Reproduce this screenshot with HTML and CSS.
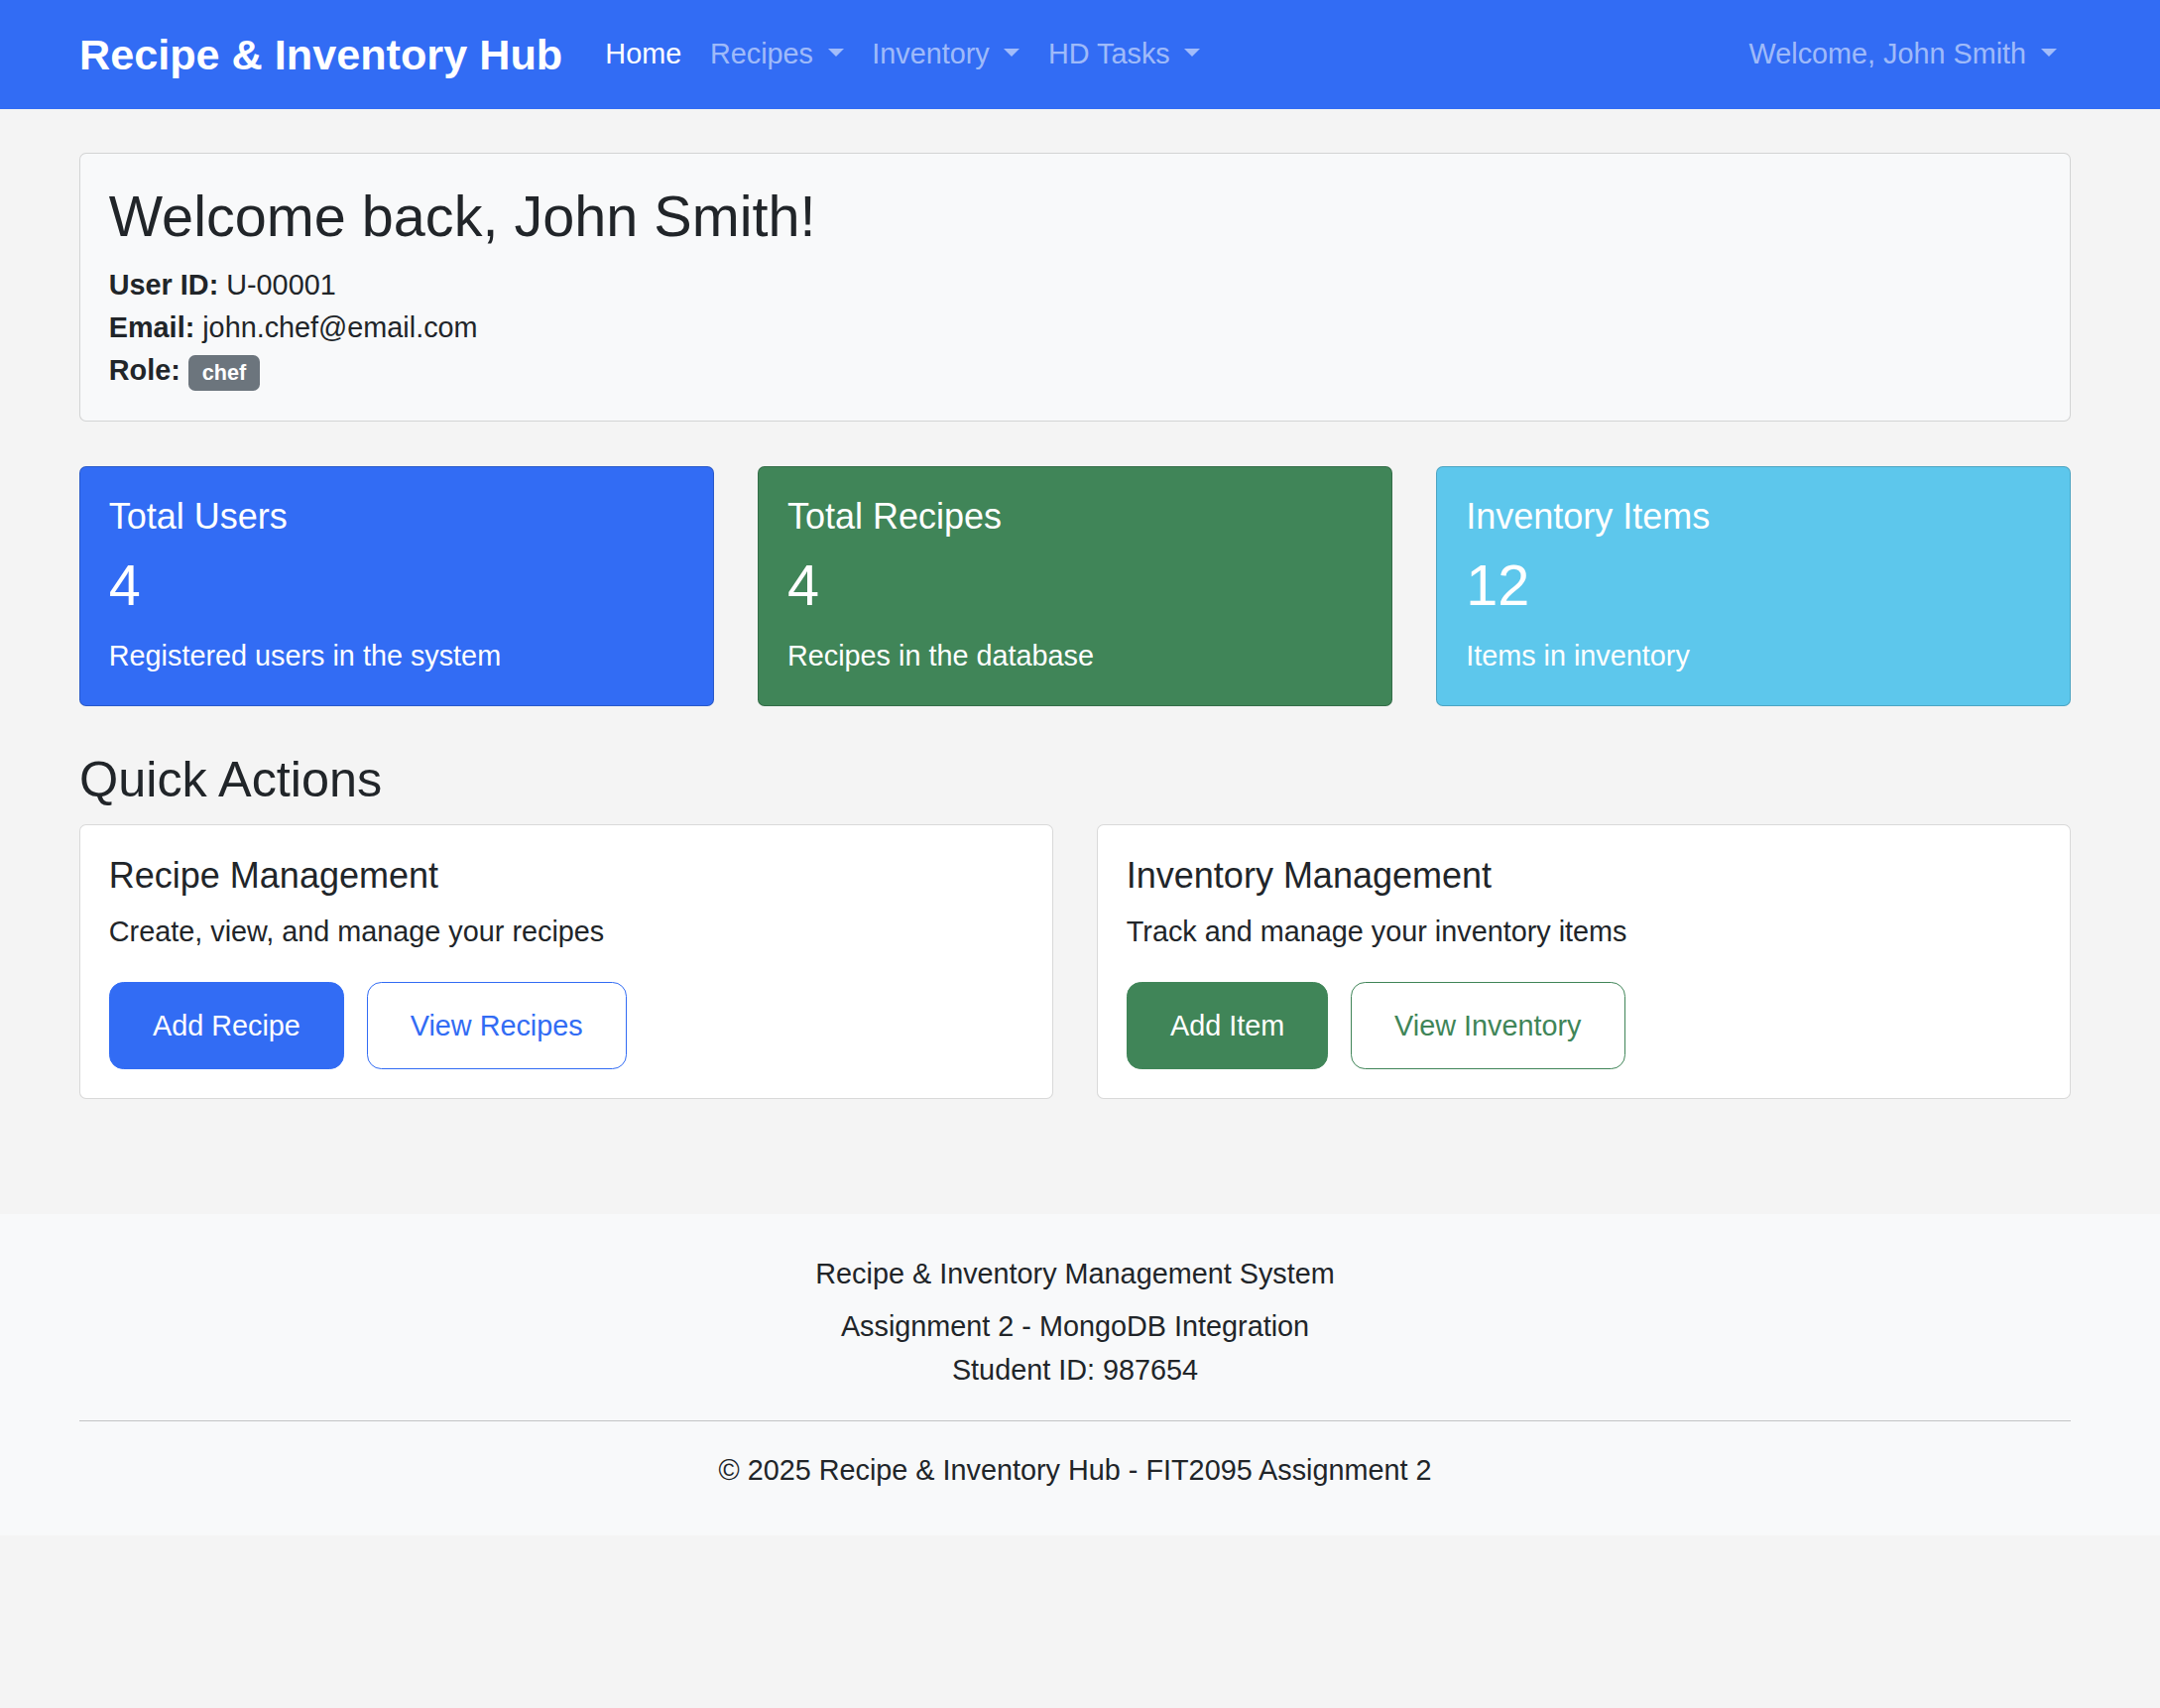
FILE: index.html
```html
<!DOCTYPE html>
<html lang="en">
<head>
<meta charset="utf-8">
<title>Recipe &amp; Inventory Hub</title>
<link rel="stylesheet" href="styles.css">
</head>
<body>
<nav class="navbar">
  <div class="container nav-inner">
    <a class="brand" href="#">Recipe &amp; Inventory Hub</a>
    <ul class="nav-links">
      <li><a class="nav-link active" href="#">Home</a></li>
      <li><a class="nav-link dropdown" href="#">Recipes</a></li>
      <li><a class="nav-link dropdown" href="#">Inventory</a></li>
      <li><a class="nav-link dropdown" href="#">HD Tasks</a></li>
    </ul>
    <ul class="nav-links nav-right">
      <li><a class="nav-link dropdown" href="#">Welcome, John Smith</a></li>
    </ul>
  </div>
</nav>

<main class="container main">
  <section class="card welcome">
    <h2 class="welcome-title">Welcome back, John Smith!</h2>
    <p class="info"><strong>User ID:</strong> U-00001<br><strong>Email:</strong> john.chef@email.com<br><strong>Role:</strong> <span class="badge">chef</span></p>
  </section>

  <div class="stats">
    <div class="stat stat-primary">
      <h5 class="stat-title">Total Users</h5>
      <h2 class="stat-value">4</h2>
      <p class="stat-text">Registered users in the system</p>
    </div>
    <div class="stat stat-success">
      <h5 class="stat-title">Total Recipes</h5>
      <h2 class="stat-value">4</h2>
      <p class="stat-text">Recipes in the database</p>
    </div>
    <div class="stat stat-info">
      <h5 class="stat-title">Inventory Items</h5>
      <h2 class="stat-value">12</h2>
      <p class="stat-text">Items in inventory</p>
    </div>
  </div>

  <h3 class="section-title">Quick Actions</h3>
  <div class="actions">
    <div class="card action">
      <h5 class="action-title">Recipe Management</h5>
      <p class="action-text">Create, view, and manage your recipes</p>
      <div class="btns">
        <a class="btn btn-primary" href="#">Add Recipe</a>
        <a class="btn btn-outline-primary" href="#">View Recipes</a>
      </div>
    </div>
    <div class="card action">
      <h5 class="action-title">Inventory Management</h5>
      <p class="action-text">Track and manage your inventory items</p>
      <div class="btns">
        <a class="btn btn-success" href="#">Add Item</a>
        <a class="btn btn-outline-success" href="#">View Inventory</a>
      </div>
    </div>
  </div>
</main>

<footer class="footer">
  <div class="container footer-inner">
    <h6 class="footer-title">Recipe &amp; Inventory Management System</h6>
    <p class="footer-text">Assignment 2 - MongoDB Integration<br>Student ID: 987654</p>
    <hr class="footer-rule">
    <p class="footer-copy">&copy; 2025 Recipe &amp; Inventory Hub - FIT2095 Assignment 2</p>
  </div>
</footer>
</body>
</html>
```

FILE: styles.css
```css
* { box-sizing: border-box; }

html, body { margin: 0; padding: 0; }

body {
  font-family: "Liberation Sans", Arial, Helvetica, sans-serif;
  font-size: 28.8px;
  line-height: 1.5;
  color: #212529;
  background: #f4f4f4;
}

a { text-decoration: none; }

h2, h3, h5, h6, p { margin: 0; font-weight: 400; }
strong { font-weight: 700; }

.container {
  width: 2008px;
  margin-left: 80px;
}

/* Navbar */
.navbar {
  background: #326cf4;
  height: 110px;
  padding: 17px 0;
}
.nav-inner {
  display: flex;
  align-items: center;
  height: 100%;
}
.brand {
  color: #fff;
  font-weight: 700;
  font-size: 43.2px;
  line-height: 1.5;
  margin-right: 28.8px;
}
.nav-links {
  display: flex;
  list-style: none;
  margin: 0;
  padding: 0;
}
.nav-right { margin-left: auto; }
.nav-link {
  display: block;
  padding: 14.4px;
  color: rgba(255, 255, 255, 0.55);
  font-size: 28.8px;
  line-height: 1.5;
}
.nav-link.active { color: #fff; }
.dropdown::after {
  content: "";
  display: inline-block;
  margin-left: 14.5px;
  vertical-align: 7.3px;
  border-top: 8.64px solid;
  border-right: 8.64px solid transparent;
  border-left: 8.64px solid transparent;
  border-bottom: 0;
}

/* Main */
.main {
  padding-top: 44px;
  margin-bottom: 116px;
}
.card {
  border: 1px solid rgba(0, 0, 0, 0.15);
  border-radius: 6.75px;
  padding: 28.8px;
}
.welcome {
  background: #f8f9fa;
  padding-bottom: 29px;
  margin-bottom: 45px;
}
.welcome-title {
  font-size: 57.6px;
  line-height: 1.2;
  margin-bottom: 13px;
}
.badge {
  display: inline-block;
  background: #6c757d;
  color: #fff;
  font-size: 21.6px;
  font-weight: 700;
  line-height: 1;
  padding: 7.56px 14px;
  border-radius: 6.75px;
  vertical-align: baseline;
}

/* Stats */
.stats {
  display: grid;
  grid-template-columns: repeat(3, 1fr);
  gap: 44.5px;
  margin-bottom: 44px;
}
.stat {
  color: #fff;
  border: 1px solid rgba(0, 0, 0, 0.175);
  border-radius: 6.75px;
  padding: 28px 28.8px 28px;
}
.stat-primary { background: #326cf4; }
.stat-success { background: #408558; }
.stat-info { background: #5dc7ec; }
.stat-title {
  font-size: 36px;
  line-height: 1.2;
  margin-bottom: 13px;
}
.stat-value {
  font-size: 57.6px;
  line-height: 1.2;
  margin-bottom: 15.5px;
}

/* Quick actions */
.section-title {
  font-size: 50.4px;
  line-height: 1.2;
  margin-bottom: 14px;
}
.actions {
  display: grid;
  grid-template-columns: 1fr 1fr;
  gap: 44px;
}
.action {
  background: #fff;
  padding-bottom: 29px;
}
.action-title {
  font-size: 36px;
  line-height: 1.2;
  margin-bottom: 14px;
}
.action-text {
  margin-bottom: 28.8px;
}
.btns {
  display: flex;
  gap: 22.5px;
}
.btn {
  display: inline-block;
  padding: 21.6px 43.2px;
  font-size: 28.8px;
  line-height: 1.5;
  border: 1px solid transparent;
  border-radius: 14.4px;
}
.btn-primary { background: #326cf4; border-color: #326cf4; color: #fff; }
.btn-outline-primary { background: transparent; border-color: #326cf4; color: #326cf4; }
.btn-success { background: #408558; border-color: #408558; color: #fff; }
.btn-outline-success { background: transparent; border-color: #408558; color: #408558; }

/* Footer */
.footer {
  background: #f8f9fa;
  padding: 43.2px 0;
}
.footer-inner { text-align: center; }
.footer-title {
  font-size: 28.8px;
  line-height: 1.2;
  margin-bottom: 14.4px;
}
.footer-text { margin-bottom: 28.8px; }
.footer-rule {
  margin: 0 0 28.8px;
  border: 0;
  border-top: 1px solid #c3c4c5;
  height: 0;
}
.footer-copy { margin: 0; }
```
